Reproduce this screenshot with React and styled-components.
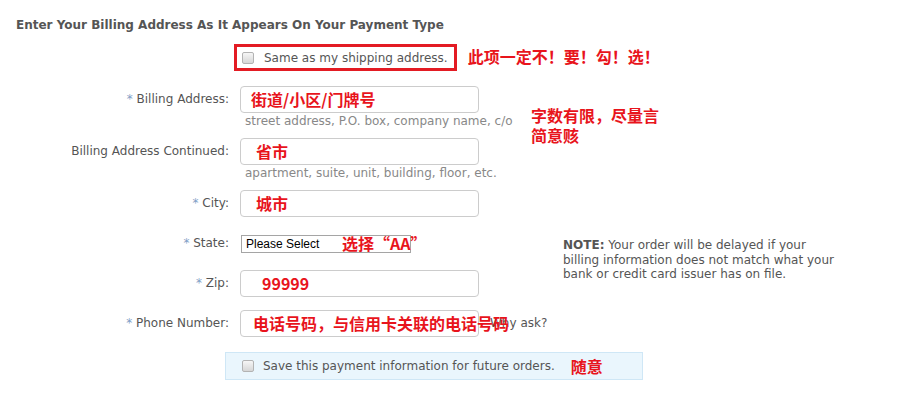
import React from 'react';
import styled, { createGlobalStyle } from 'styled-components';

const Global = createGlobalStyle`
  html, body { margin: 0; padding: 0; background: #fff; }
  body {
    font-family: "DejaVu Sans", Verdana, sans-serif;
    font-size: 12px;
    color: #555;
  }
`;

const Page = styled.div`
  width: 917px;
  height: 396px;
  overflow: hidden;
  padding-top: 17px;
  box-sizing: border-box;
`;

const Heading = styled.h2`
  margin: 0 0 11px 16px;
  font-size: 12px;
  line-height: 16px;
  font-weight: bold;
  color: #555;
`;

const SameRow = styled.div`
  display: flex;
  align-items: center;
  gap: 11px;
  padding-left: 234px;
`;

const RedBox = styled.label`
  display: flex;
  align-items: center;
  gap: 10px;
  height: 27px;
  box-sizing: border-box;
  border: 3px solid #e31b23;
  padding: 0 6px 0 5px;
`;

const Check = styled.input.attrs({ type: 'checkbox' })`
  appearance: none;
  margin: 0;
  width: 12px;
  height: 12px;
  border: 1px solid #b3b3b3;
  border-radius: 2px;
  background: linear-gradient(#f6f6f6, #d6d6d6);
  box-sizing: border-box;
  flex: none;
`;

const CheckText = styled.span`
  color: #555;
  white-space: nowrap;
`;

const Mark = styled.span`
  font-family: "Noto Sans CJK SC", sans-serif;
  font-weight: 700;
  font-size: 16px;
  line-height: 20px;
  color: #e8141c;
  white-space: nowrap;
  margin: ${p => p.$m || '0'};
`;

const Form = styled.div`
  display: grid;
  grid-template-columns: 229px 239px 1fr;
  column-gap: 11px;
  row-gap: 13px;
  margin-top: 15px;
`;

const Label = styled.label`
  grid-column: 1;
  text-align: right;
  line-height: 27px;
  white-space: nowrap;
  color: #555;
`;

const Star = styled.span`
  color: #7f9ec6;
`;

const Field = styled.div`
  grid-column: 2;
  position: relative;
  display: flex;
  flex-direction: column;
  justify-content: ${p => (p.$center ? 'center' : 'flex-start')};
  height: ${p => (p.$center ? '27px' : 'auto')};
`;

const TextInput = styled.input.attrs({ type: 'text' })`
  display: block;
  width: 100%;
  height: 27px;
  margin: 0;
  border: 1px solid #ccc;
  border-radius: 4px;
  box-sizing: border-box;
  background: #fff;
  outline: none;
`;

const Overlay = styled.span`
  position: absolute;
  top: ${p => p.$top || 0}px;
  left: ${p => p.$x}px;
  z-index: 1;
  height: 27px;
  line-height: 27px;
  font-family: "Noto Sans CJK SC", sans-serif;
  font-weight: 700;
  font-size: 16px;
  color: #e8141c;
  white-space: nowrap;
  pointer-events: none;
`;

const Helper = styled.div`
  padding-left: 5px;
  line-height: 16px;
  margin-bottom: -4px;
  color: #888;
  white-space: nowrap;
`;

const Select = styled.select`
  appearance: none;
  width: 170px;
  height: 18px;
  margin: 0 0 0 1px;
  padding: 0 4px;
  border: 1px solid #a5a5a5;
  border-radius: 0;
  background: #fff;
  font-family: "Liberation Sans", Arial, sans-serif;
  font-size: 12px;
  color: #000;
  box-sizing: border-box;
`;

const Side = styled.div`
  grid-column: 3;
  grid-row: ${p => p.$row || 'auto'};
  line-height: ${p => p.$lh || '27px'};
  margin: ${p => p.$m || '0'};
  white-space: nowrap;
`;

const SideMark = styled.div`
  font-family: "Noto Sans CJK SC", sans-serif;
  font-weight: 700;
  font-size: 16px;
  line-height: 20px;
  color: #e8141c;
`;

const Note = styled.div`
  line-height: 14.5px;
  color: #555;
  b { font-weight: bold; }
`;

const SaveBox = styled.label`
  display: flex;
  align-items: center;
  margin: 15px 0 0 225px;
  width: 418px;
  height: 28px;
  box-sizing: border-box;
  padding-left: 16px;
  gap: 9px;
  background: #eaf6fd;
  border: 1px solid #cfe7f6;
`;

export default function App() {
  return (
    <Page>
      <Global />
      <Heading>Enter Your Billing Address As It Appears On Your Payment Type</Heading>
      <SameRow>
        <RedBox>
          <Check />
          <CheckText>Same as my shipping address.</CheckText>
        </RedBox>
        <Mark $m="0 0 4px 0">此项一定不！要！勾！选！</Mark>
      </SameRow>

      <Form>
        <Label><Star>*</Star> Billing Address:</Label>
        <Field>
          <TextInput />
          <Overlay $x={11}>街道/小区/门牌号</Overlay>
          <Helper>street address, P.O. box, company name, c/o</Helper>
        </Field>
        <Side $row="span 2" $m="19px 0 0 41px">
          <SideMark>字数有限，尽量言<br />简意赅</SideMark>
        </Side>

        <Label>Billing Address Continued:</Label>
        <Field>
          <TextInput />
          <Overlay $x={16}>省市</Overlay>
          <Helper>apartment, suite, unit, building, floor, etc.</Helper>
        </Field>

        <Label><Star>*</Star> City:</Label>
        <Field>
          <TextInput />
          <Overlay $x={16}>城市</Overlay>
        </Field>
        <Side />

        <Label><Star>*</Star> State:</Label>
        <Field $center>
          <Select defaultValue="">
            <option value="">Please Select</option>
          </Select>
          <Overlay $x={102}>选择“AA”</Overlay>
        </Field>
        <Side $row="span 2" $lh="14.5px" $m="8px 0 0 73px">
          <Note>
            <b>NOTE:</b> Your order will be delayed if your<br />
            billing information does not match what your<br />
            bank or credit card issuer has on file.
          </Note>
        </Side>

        <Label><Star>*</Star> Zip:</Label>
        <Field>
          <TextInput />
          <Overlay $x={22}>99999</Overlay>
        </Field>

        <Label><Star>*</Star> Phone Number:</Label>
        <Field>
          <TextInput />
          <Overlay $x={13}>电话号码，与信用卡关联的电话号码</Overlay>
        </Field>
        <Side>Why ask?</Side>
      </Form>

      <SaveBox>
        <Check />
        <CheckText>Save this payment information for future orders.</CheckText>
        <Mark $m="0 0 0 7px">随意</Mark>
      </SaveBox>
    </Page>
  );
}
